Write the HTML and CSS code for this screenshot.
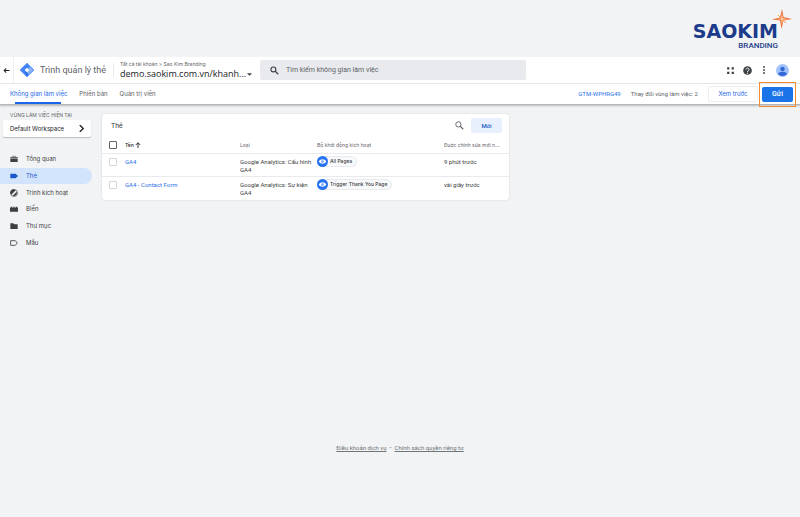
FILE: index.html
```html
<!DOCTYPE html>
<html lang="vi">
<head>
  <meta charset="UTF-8">
  <meta name="viewport" content="width=device-width, initial-scale=1">
  <title>Trình quản lý thẻ</title>
  <link rel="stylesheet" href="styles.css">
</head>
<body>
  <div class="brand">
    <div class="brand-logo">
      <span class="brand-name">SAOKIM</span>
      <span class="brand-sub">BRANDING</span>
      <svg class="brand-star" viewBox="0 0 20 20">
        <path d="M10 0 L11.500 8 L20 10 L11.500 11.500 L9.500 20 L8 11.500 L0 10.500 L8 8.500 Z" fill="#ef6c35"/>
        <path d="M6 6l3 3M14 14l-3-3" stroke="#f39a55" stroke-width="1"/>
        <path d="M10 4 L10.800 9 L16 10 L10.800 10.800 L9.800 16 L9 10.800 L4 10.300 L9 9.500 Z" fill="#fbc795"/>
      </svg>
    </div>
  </div>

  <header class="topbar">
    <button class="back" aria-label="Quay lại">
      <svg viewBox="0 0 24 24" width="7" height="7"><path d="M22 12H4M11 5l-7 7 7 7" fill="none" stroke="#202124" stroke-width="3.500"/></svg>
    </button>
    <svg class="gtm-logo" viewBox="0 0 24 24" width="14" height="14">
      <path d="M12 1 L23 12 L12 23 L1 12 Z" fill="#4285f4" stroke="#4285f4" stroke-width="2" stroke-linejoin="round"/>
      <path d="M16.500 6 L23 12 L12 23 L11 17 Z" fill="#8ab4f8"/>
      <path d="M8 15 L12 16 L15 20 L12 23 Z" fill="#2a6fe8"/>
      <path d="M12 8 L16 12 L12 16 L8 12 Z" fill="#ffffff"/>
    </svg>
    <h1 class="app-name">Trình quản lý thẻ</h1>
    <div class="account">
      <span class="account-path">Tất cả tài khoản &gt; Sao Kim Branding</span>
      <button class="container-name">demo.saokim.com.vn/khanh...
        <svg viewBox="0 0 10 5" width="5" height="3"><path d="M0 0h10L5 5z" fill="#3c4043"/></svg>
      </button>
    </div>
    <label class="search">
      <svg viewBox="0 0 24 24" width="9" height="9"><circle cx="9" cy="9" r="6.500" fill="none" stroke="#3c4043" stroke-width="3"/><path d="M14 14l8 8" stroke="#3c4043" stroke-width="3.500"/></svg>
      <input type="search" placeholder="Tìm kiếm không gian làm việc" aria-label="Tìm kiếm không gian làm việc">
    </label>
    <div class="tools">
      <button aria-label="Ứng dụng">
        <svg viewBox="0 0 8 8" width="9" height="9"><path d="M1 1h2v2H1zM5 1h2v2H5zM1 5h2v2H1zM5 5h2v2H5z" fill="#3c4043"/></svg>
      </button>
      <button aria-label="Trợ giúp">
        <svg viewBox="0 0 24 24" width="9" height="9"><circle cx="12" cy="12" r="11.500" fill="#3c4043"/><path d="M8 9.500a4 4 0 1 1 6.500 3C13 13.500 12 14 12 16" fill="none" stroke="#fff" stroke-width="2.500"/><circle cx="12" cy="19" r="1.600" fill="#fff"/></svg>
      </button>
      <button aria-label="Tùy chọn khác">
        <svg viewBox="0 0 8 8" width="8" height="8"><circle cx="4" cy="1" r="0.900" fill="#3c4043"/><circle cx="4" cy="4" r="0.900" fill="#3c4043"/><circle cx="4" cy="7" r="0.900" fill="#3c4043"/></svg>
      </button>
      <button aria-label="Tài khoản">
        <svg viewBox="0 0 26 26" width="13" height="13"><circle cx="13" cy="13" r="13" fill="#a1c2fa"/><circle cx="13" cy="10" r="4.500" fill="#3367d6"/><path d="M4 20c2-6 16-6 18 0-4 5-14 5-18 0z" fill="#3367d6"/></svg>
      </button>
    </div>
  </header>

  <nav class="subbar">
    <a class="tab active" href="#">Không gian làm việc</a>
    <a class="tab" href="#">Phiên bản</a>
    <a class="tab" href="#">Quản trị viên</a>
    <a class="gtm-id" href="#">GTM-WPHRG49</a>
    <span class="changes">Thay đổi vùng làm việc: 2</span>
    <button class="preview">Xem trước</button>
    <div class="submit-wrap"><button class="submit">Gửi</button></div>
  </nav>

  <div class="workspace">
    <aside class="sidebar">
      <div class="side-title">VÙNG LÀM VIỆC HIỆN TẠI</div>
      <button class="side-select">Default Workspace
        <svg viewBox="0 0 8 8" width="7" height="7"><path d="M2 0l4 4-4 4" fill="none" stroke="#202124" stroke-width="1.500"/></svg>
      </button>
      <ul class="menu">
        <li><a href="#">
          <svg viewBox="0 0 24 24"><path d="M7 7V4h10v3" fill="none" stroke="#5f6368" stroke-width="2"/><path d="M1 6h22v5H1z" fill="#5f6368"/><path d="M1 12h22v9H1z" fill="#3c4043"/></svg>
          Tổng quan</a></li>
        <li><a class="current" href="#">
          <svg viewBox="0 0 24 24"><path d="M1 5h16l7 7-7 7H1z" fill="#1a57c8"/></svg>
          Thẻ</a></li>
        <li><a href="#">
          <svg viewBox="0 0 24 24"><circle cx="12" cy="12" r="10.500" fill="none" stroke="#3c4043" stroke-width="2"/><path d="M4 17L17 4A9 9 0 0 0 4 17z" fill="#3c4043"/><path d="M8 20L20 8A9 9 0 0 1 8 20z" fill="#3c4043"/></svg>
          Trình kích hoạt</a></li>
        <li><a href="#">
          <svg viewBox="0 0 24 24"><path d="M0 8h2V5h5v3h3V5h4v3h3V5h5v3h2v12H0z" fill="#3c4043"/></svg>
          Biến</a></li>
        <li><a href="#">
          <svg viewBox="0 0 24 24"><path d="M1 4h9l3 3h10v14H1z" fill="#3c4043"/></svg>
          Thư mục</a></li>
        <li><a href="#">
          <svg viewBox="0 0 24 24"><path d="M2 5h14l6 7-6 7H2z" fill="none" stroke="#3c4043" stroke-width="2.500" stroke-linejoin="round"/></svg>
          Mẫu</a></li>
      </ul>
    </aside>

    <main class="content">
      <section class="card">
        <div class="card-head">
          <h2>Thẻ</h2>
          <button class="card-search" aria-label="Tìm kiếm">
            <svg viewBox="0 0 24 24" width="9" height="9"><circle cx="9" cy="9" r="7" fill="none" stroke="#5f6368" stroke-width="2.500"/><path d="M14 14l8 8" stroke="#5f6368" stroke-width="3"/></svg>
          </button>
          <button class="new">Mới</button>
        </div>
        <table>
          <thead>
            <tr>
              <th class="col-check"><input type="checkbox" aria-label="Chọn tất cả"></th>
              <th class="col-name">Tên
                <svg viewBox="0 0 8 8" width="6" height="6"><path d="M4 8V1M1 4l3-3 3 3" fill="none" stroke="#202124" stroke-width="1.200"/></svg>
              </th>
              <th class="col-type">Loại</th>
              <th class="col-trigger">Bộ khởi động kích hoạt</th>
              <th class="col-date">Được chỉnh sửa mới n...</th>
            </tr>
          </thead>
          <tbody>
            <tr>
              <td><input type="checkbox" aria-label="Chọn GA4"></td>
              <td><a href="#">GA4</a></td>
              <td>Google Analytics: Cấu hình GA4</td>
              <td><span class="chip">
                <svg viewBox="0 0 22 22"><circle cx="11" cy="11" r="11" fill="#2672f2"/><path d="M3.500 11c3.500-6 11.500-6 15 0-3.500 6-11.500 6-15 0z" fill="#fff"/><circle cx="11" cy="11" r="3" fill="#8ab4f8"/></svg>
                All Pages</span></td>
              <td>9 phút trước</td>
            </tr>
            <tr>
              <td><input type="checkbox" aria-label="Chọn GA4 - Contact Form"></td>
              <td><a href="#">GA4 - Contact Form</a></td>
              <td>Google Analytics: Sự kiện GA4</td>
              <td><span class="chip">
                <svg viewBox="0 0 22 22"><circle cx="11" cy="11" r="11" fill="#2672f2"/><path d="M3.500 11c3.500-6 11.500-6 15 0-3.500 6-11.500 6-15 0z" fill="#fff"/><circle cx="11" cy="11" r="3" fill="#8ab4f8"/></svg>
                Trigger Thank You Page</span></td>
              <td>vài giây trước</td>
            </tr>
          </tbody>
        </table>
      </section>
    </main>
  </div>

  <footer class="footer">
    <a href="#">Điều khoản dịch vụ</a>
    <span>•</span>
    <a href="#">Chính sách quyền riêng tư</a>
  </footer>
</body>
</html>
```
FILE: styles.css
```css
* {
  box-sizing: border-box;
}

body {
  margin: 0;
  min-height: 100vh;
  display: flex;
  flex-direction: column;
  background: #f1f3f4;
  color: #3c4043;
  font-family: Roboto, "Noto Sans", sans-serif;
  font-size: 6px;
  line-height: 8px;
}

button {
  margin: 0;
  padding: 0;
  border: none;
  background: none;
  color: inherit;
  font: inherit;
  cursor: pointer;
}

a {
  color: #2a70ea;
  text-decoration: none;
}

svg {
  display: block;
  flex-shrink: 0;
}

/* brand strip */
.brand {
  height: 57px;
  display: flex;
  justify-content: flex-end;
  padding: 20px 22px 0 0;
}

.brand-logo {
  position: relative;
  display: flex;
  flex-direction: column;
  align-items: flex-end;
  color: #1d3b8b;
}

.brand-name {
  font: bold 19px/22px "DejaVu Sans", sans-serif;
}

.brand-sub {
  font: 500 8px/8px Roboto, sans-serif;
}

.brand-star {
  position: absolute;
  top: -11px;
  right: -14px;
  width: 20px;
  height: 20px;
}

/* top bar */
.topbar {
  height: 27px;
  display: flex;
  align-items: center;
  background: #fff;
  border-bottom: 1px solid #e8eaed;
}

.back {
  width: 14px;
  height: 26px;
  padding-left: 3px;
  border-right: 1px solid #eceef0;
}

.gtm-logo {
  margin-left: 6px;
}

.app-name {
  margin: 0 0 0 6px;
  padding-right: 7px;
  border-right: 1px solid #e8eaed;
  font-size: 9px;
  line-height: 14px;
  font-weight: 400;
  color: #5f6368;
  white-space: nowrap;
}

.account {
  margin-left: 6px;
  width: 140px;
  white-space: nowrap;
}

.account-path {
  display: block;
  font-family: Inter, sans-serif;
  font-size: 5px;
  color: #5f6368;
}

.container-name {
  width: 100%;
  padding-right: 8px;
  display: flex;
  align-items: center;
  justify-content: space-between;
  font-family: "Open Sans", sans-serif;
  font-size: 9px;
  line-height: 12px;
  color: #202124;
}

.search {
  flex: 0 1 266px;
  height: 20px;
  display: flex;
  align-items: center;
  gap: 7px;
  padding: 0 10px;
  border-radius: 2px;
  background: #e8eaed;
}

.search input {
  flex: 1;
  min-width: 0;
  padding: 0;
  border: none;
  outline: none;
  background: none;
  font: 7px/10px Roboto, sans-serif;
}

.search input::placeholder {
  color: #5f6368;
}

.tools {
  margin-left: auto;
  padding-right: 11px;
  display: flex;
  align-items: center;
  gap: 8px;
}

/* tabs and actions */
.subbar {
  height: 21px;
  display: flex;
  align-items: center;
  padding: 0 4px 0 10px;
  background: #fff;
  border-bottom: 1px solid #b5b8bb;
  box-shadow: 0 1px 2px rgba(60, 64, 67, 0.3);
  white-space: nowrap;
}

.tab {
  position: relative;
  height: 20px;
  margin-right: 12px;
  font-family: Inter, sans-serif;
  line-height: 20px;
  color: #5f6368;
}

.tab.active {
  color: #1a66e8;
}

.tab.active::after {
  content: "";
  position: absolute;
  left: 5px;
  right: 6px;
  bottom: 0;
  height: 2px;
  background: #1a66e8;
}

.gtm-id {
  margin-left: auto;
}

.changes {
  margin: 0 10px;
  color: #5f6368;
}

.preview {
  width: 50px;
  height: 16px;
  border: 1px solid #eceef0;
  border-radius: 2px;
  color: #1a66e8;
  font-family: Inter, sans-serif;
}

.submit-wrap {
  position: relative;
  margin-left: 1px;
  padding: 0 3px;
}

.submit-wrap::after {
  content: "";
  position: absolute;
  inset: -5px 0;
  border: 1px solid #f28b30;
  pointer-events: none;
}

.submit {
  display: block;
  width: 31px;
  height: 15px;
  border-radius: 2px;
  background: #1a73e8;
  color: #fff;
  font-size: 7px;
  font-weight: 500;
}

/* sidebar */
.workspace {
  display: flex;
  align-items: flex-start;
}

.sidebar {
  width: 92px;
  flex-shrink: 0;
  padding-top: 6px;
  font-family: Inter, "Noto Sans", sans-serif;
}

.side-title {
  padding-left: 10px;
  font-size: 5px;
  line-height: 9px;
  color: #5f6368;
  white-space: nowrap;
}

.side-select {
  width: 88px;
  height: 17px;
  margin-left: 3px;
  padding: 0 6px 0 7px;
  display: flex;
  align-items: center;
  justify-content: space-between;
  border-radius: 2px;
  background: #fff;
  box-shadow: 0 1px 1px rgba(60, 64, 67, 0.3);
  color: #202124;
}

.menu {
  height: 100px;
  margin: 14px 0 0;
  padding: 0;
  display: grid;
  grid-auto-rows: 1fr;
  list-style: none;
}

.menu a {
  height: 100%;
  display: flex;
  align-items: center;
  gap: 8px;
  padding-left: 10px;
  border-radius: 0 9px 9px 0;
  color: #3c4043;
}

.menu svg {
  width: 8px;
  height: 8px;
}

.menu .current {
  background: #d2e3fc;
  color: #1a57c8;
}

/* tag list */
.content {
  flex: 1;
  padding: 9px 10px;
}

.card {
  max-width: 407px;
  padding-bottom: 1px;
  background: #fff;
  border-radius: 3px;
  box-shadow: 0 0 2px rgba(60, 64, 67, 0.2);
  overflow: hidden;
}

.card-head {
  height: 23px;
  display: flex;
  align-items: center;
  padding: 0 7px 0 9px;
}

.card-head h2 {
  margin: 0;
  flex: 1;
  font-size: 7px;
  font-weight: 400;
}

.new {
  width: 31px;
  height: 15px;
  margin-left: 7px;
  border-radius: 2px;
  background: #e8f0fe;
  color: #1a57c8;
  font-weight: 500;
}

table {
  width: 100%;
  table-layout: fixed;
  border-collapse: collapse;
}

th {
  height: 16px;
  padding: 0;
  text-align: left;
  font-family: Inter, sans-serif;
  font-size: 5px;
  font-weight: 400;
  color: #5f6368;
  white-space: nowrap;
}

td {
  height: 23px;
  padding: 4px 0 2px;
  border-top: 1px solid #e8eaed;
  vertical-align: top;
}

.col-check {
  width: 23px;
}

.col-name {
  width: 115px;
  font-weight: 500;
  color: #202124;
}

.col-name svg {
  display: inline-block;
  vertical-align: middle;
}

.col-type {
  width: 77px;
}

.col-trigger {
  width: 127px;
}

input[type="checkbox"] {
  appearance: none;
  display: block;
  width: 8px;
  height: 8px;
  margin: 0 0 0 7px;
  border: 1px solid #d4d6d8;
  border-radius: 1px;
}

th input[type="checkbox"] {
  border-color: #5f6368;
}

.chip {
  display: flex;
  width: fit-content;
  align-items: center;
  gap: 2px;
  height: 11px;
  margin-top: -2px;
  padding-right: 4px;
  border: 1px solid #e8eaed;
  border-left: none;
  border-radius: 6px;
  background: #f8f9fa;
  font-family: Inter, sans-serif;
  font-size: 5px;
  font-weight: 500;
  white-space: nowrap;
}

.chip svg {
  width: 11px;
  height: 11px;
}

.footer {
  margin-top: auto;
  padding-bottom: 65px;
  display: flex;
  justify-content: center;
  gap: 3px;
  color: #80868b;
}

.footer a {
  color: #70757a;
  text-decoration: underline;
}
```
